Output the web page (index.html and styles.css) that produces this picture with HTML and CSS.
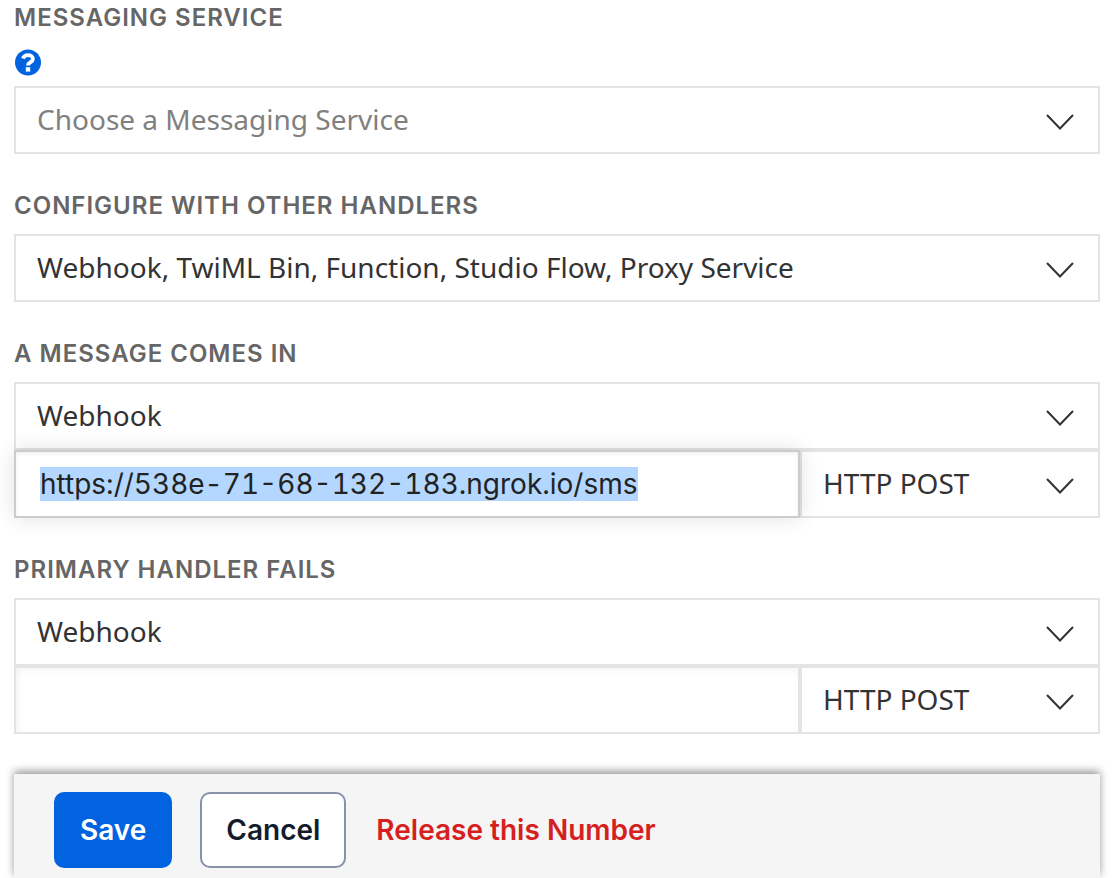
FILE: index.html
```html
<!DOCTYPE html>
<html lang="en">
<head>
  <meta charset="UTF-8">
  <meta name="viewport" content="width=device-width, initial-scale=1.0">
  <title>Configure Number</title>
  <link rel="stylesheet" href="styles.css">
</head>
<body>
  <form class="messaging-form">
    <!-- Messaging Service -->
    <div class="field">
      <label class="field-label" for="service">MESSAGING SERVICE</label>
      <button type="button" class="help-button" aria-label="Help">
        <svg class="help-icon" viewBox="0 0 28 28" aria-hidden="true">
          <circle cx="14" cy="13.5" r="13" fill="#0263e0"/>
          <path d="M8.9 9.5C9.8 7.2 11.6 6.2 14 6.2c2.9 0 4.9 1.5 4.9 3.8 0 3.3-4.9 3-4.9 6.6" fill="none" stroke="#fff" stroke-width="3.8"/>
          <rect x="11.8" y="18.2" width="4.4" height="4.4" fill="#fff"/>
        </svg>
      </button>
      <div class="select-box">
        <select id="service" class="select placeholder">
          <option>Choose a Messaging Service</option>
        </select>
        <svg class="chevron" viewBox="0 0 28 16" aria-hidden="true"><path d="M1 1l13 13.5L27 1"/></svg>
      </div>
    </div>

    <!-- Other Handlers -->
    <div class="field">
      <label class="field-label" for="handlers">CONFIGURE WITH OTHER HANDLERS</label>
      <div class="select-box">
        <select id="handlers" class="select">
          <option>Webhook, TwiML Bin, Function, Studio Flow, Proxy Service</option>
        </select>
        <svg class="chevron" viewBox="0 0 28 16" aria-hidden="true"><path d="M1 1l13 13.5L27 1"/></svg>
      </div>
    </div>

    <!-- Incoming Message -->
    <div class="field">
      <label class="field-label" for="incoming">A MESSAGE COMES IN</label>
      <div class="select-box">
        <select id="incoming" class="select">
          <option>Webhook</option>
        </select>
        <svg class="chevron" viewBox="0 0 28 16" aria-hidden="true"><path d="M1 1l13 13.5L27 1"/></svg>
      </div>
      <div class="url-row">
        <input type="text" id="incoming-url" class="url-input" aria-label="Webhook URL" spellcheck="false" value="https://538e-71-68-132-183.ngrok.io/sms">
        <div class="select-box method">
          <select class="select" aria-label="HTTP method">
            <option>HTTP POST</option>
            <option>HTTP GET</option>
          </select>
          <svg class="chevron" viewBox="0 0 28 16" aria-hidden="true"><path d="M1 1l13 13.5L27 1"/></svg>
        </div>
      </div>
    </div>

    <!-- Fallback -->
    <div class="field">
      <label class="field-label" for="fallback">PRIMARY HANDLER FAILS</label>
      <div class="select-box">
        <select id="fallback" class="select">
          <option>Webhook</option>
        </select>
        <svg class="chevron" viewBox="0 0 28 16" aria-hidden="true"><path d="M1 1l13 13.5L27 1"/></svg>
      </div>
      <div class="url-row">
        <input type="text" class="url-input" aria-label="Fallback URL" spellcheck="false">
        <div class="select-box method">
          <select class="select" aria-label="Fallback HTTP method">
            <option>HTTP POST</option>
            <option>HTTP GET</option>
          </select>
          <svg class="chevron" viewBox="0 0 28 16" aria-hidden="true"><path d="M1 1l13 13.5L27 1"/></svg>
        </div>
      </div>
    </div>

    <!-- Actions -->
    <div class="actions">
      <button type="submit" class="button save">Save</button>
      <button type="button" class="button cancel">Cancel</button>
      <a href="#" class="release">Release this Number</a>
    </div>
  </form>

  <script>
    // Select the webhook URL so it can be replaced right away
    const incomingUrl = document.getElementById('incoming-url');
    incomingUrl.focus();
    incomingUrl.select();
  </script>
</body>
</html>
```
FILE: styles.css
```css
/* General Styles */
* {
  box-sizing: border-box;
}

html {
  height: 100%;
}

body {
  height: 100%;
  margin: 0;
  background: #fff;
  font-family: Inter, 'Liberation Sans', sans-serif;
}

.messaging-form {
  display: flex;
  flex-direction: column;
  gap: 36px;
  min-height: 100%;
  padding: 2px 12px 0 14px;
}

/* Fields */
.field {
  display: flex;
  flex-direction: column;
}

.field-label {
  padding-top: 1px;
  margin-bottom: 13px;
  color: #666;
  font-size: 24px;
  font-weight: 600;
  line-height: 30px;
  letter-spacing: 1px;
}

.help-button {
  align-self: flex-start;
  height: 28px;
  margin: 3px 0 9px;
  padding: 0;
  border: none;
  background: none;
  cursor: pointer;
}

.help-icon {
  display: block;
  width: 28px;
  height: 28px;
}

/* Selects */
.select-box {
  position: relative;
}

.select {
  display: block;
  width: 100%;
  height: 68px;
  padding: 0 60px 2px 21px;
  border: 2px solid #e4e4e4;
  border-radius: 0;
  background: #fff;
  color: #333;
  font-family: 'Noto Sans', 'Open Sans', sans-serif;
  font-size: 28px;
  appearance: none;
}

.select.placeholder {
  color: #808080;
}

.chevron {
  position: absolute;
  top: 28px;
  right: 26px;
  width: 28px;
  height: 16px;
  fill: none;
  stroke: #333;
  stroke-width: 2;
  pointer-events: none;
}

/* URL Row */
.url-row {
  display: flex;
}

.url-input {
  flex: 1;
  min-width: 0;
  height: 68px;
  padding: 0 24px;
  border: 2px solid #e4e4e4;
  border-radius: 0;
  background: #fff;
  box-shadow: inset 2px 2px 6px rgba(0, 0, 0, 0.05);
  color: #222;
  font-family: inherit;
  font-size: 28px;
  font-variant-numeric: tabular-nums;
  outline: none;
}

.url-input:focus {
  position: relative;
  border-color: #ccc;
  box-shadow: 0 0 20px rgba(0, 0, 0, 0.12), inset 0 2px 4px rgba(0, 0, 0, 0.06);
  z-index: 1;
}

.url-input::selection {
  background: #b3d7ff;
  color: #222;
}

.method {
  width: 300px;
}

/* Actions */
.actions {
  display: flex;
  flex: 1;
  align-items: flex-start;
  margin-top: 4px;
  padding: 18px 40px 0;
  background: #f5f5f5;
  box-shadow: 0 -3px 8px rgba(0, 0, 0, 0.4);
}

.button {
  height: 76px;
  margin-right: 28px;
  padding: 0 24px;
  border: 2px solid #0263e0;
  border-radius: 10px;
  font-family: inherit;
  font-size: 28px;
  font-weight: 600;
  cursor: pointer;
}

.save {
  background: #0263e0;
  color: #fff;
}

.cancel {
  border-color: #8891aa;
  background: #fff;
  color: #121c2d;
}

.release {
  margin-left: 2px;
  color: #d61f1f;
  font-size: 28px;
  font-weight: 600;
  line-height: 76px;
  text-decoration: none;
}
```
